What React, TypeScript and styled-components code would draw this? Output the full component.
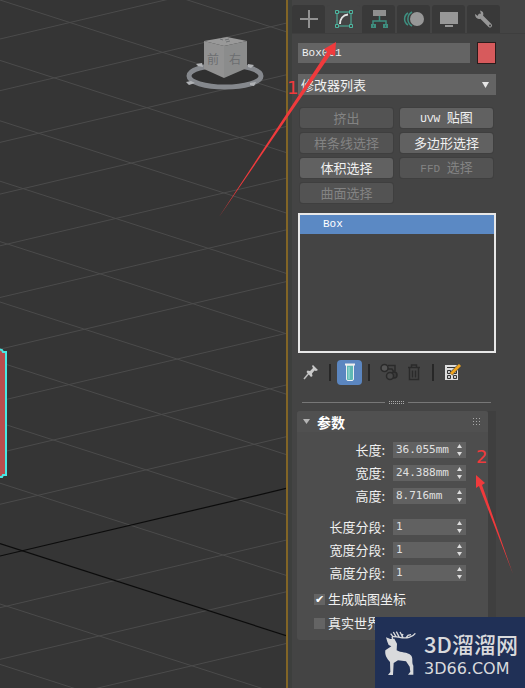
import React from "react";
import styled, { createGlobalStyle, css } from "styled-components";

const cjk = `"Noto Sans CJK SC", sans-serif`;

const GlobalStyle = createGlobalStyle`
  * { box-sizing: border-box; }
  body { margin: 0; background: #444444; }
  button, input, select { font: inherit; color: inherit; margin: 0; padding: 0; border: 0; }
`;

const Page = styled.div`
  position: relative;
  display: grid;
  grid-template-columns: minmax(0, 1fr) 237px;
  min-height: 100vh;
  overflow: hidden;
  color: #f0f0f0;
  font: 13px/16px ${cjk};
`;

const Viewport = styled.main`
  position: relative;
  background: #353535;
  border-right: 2px solid #826526;
`;

const Scene = styled.svg`
  position: absolute;
  inset: 0;
  width: 100%;
  height: 100%;
`;

const Panel = styled.aside`
  display: flex;
  flex-direction: column;
  background: #444444;
  border-left: 4px solid #3d3f3d;
  padding-top: 5px;
`;

const Tabs = styled.nav`
  display: flex;
  gap: 2px;
  border-bottom: 1px solid #3e3e3e;
`;

const Tab = styled.button<{ $active?: boolean }>`
  display: grid;
  place-items: center;
  width: 33px;
  height: 28px;
  border-radius: 3px 3px 0 0;
  background: ${(p) => (p.$active ? "#444444" : "#393939")};
`;

const PanelBody = styled.div`
  display: flex;
  flex-direction: column;
  padding: 8px 29px 0 6px;
`;

const NameRow = styled.div`
  display: flex;
  align-items: center;
  gap: 7px;
`;

const latin = css`
  font-family: "Liberation Mono", "Noto Sans CJK SC", monospace;
  font-size: 11px;
`;

const NameInput = styled.input`
  ${latin}
  flex: 1;
  min-width: 0;
  height: 20px;
  padding-left: 4px;
  background: #646464;
`;

const Swatch = styled.button`
  width: 19px;
  height: 22px;
  background: #d75a5c;
  border: 1px solid #2b1c1c;
`;

const SelectBox = styled.div`
  position: relative;
  margin: 10px 0 13px;
`;

const ModifierSelect = styled.select`
  appearance: none;
  display: block;
  width: 100%;
  height: 21px;
  padding-left: 3px;
  border-radius: 0;
  background: #646464;
`;

const SelectArrow = styled.svg`
  position: absolute;
  right: 7px;
  top: 8px;
  pointer-events: none;
`;

const ButtonGrid = styled.div`
  display: grid;
  grid-template-columns: 1fr 1fr;
  gap: 5px 7px;
  margin: 0 3px 10px 2px;
`;

const ModifierButton = styled.button`
  height: 20px;
  border-radius: 3px;
  background: #616161;
  box-shadow: 0 0 0 1px #3f3f3f;
  line-height: 18px;
  &:disabled {
    background: #535353;
    color: #838383;
  }
`;

const Latin = styled.span`
  ${latin}
`;

const Stack = styled.ul`
  height: 140px;
  margin: 0 0 5px;
  padding: 0;
  list-style: none;
  border: 2px solid #e8e8e8;
  background: #444444;
`;

const StackItem = styled.li`
  ${latin}
  height: 19px;
  line-height: 19px;
  padding-left: 23px;
  background: #5b89c4;
  color: #ffffff;
`;

const Toolbar = styled.div`
  display: flex;
  align-items: center;
  height: 28px;
`;

const ToolButton = styled.button<{ $active?: boolean }>`
  display: grid;
  place-items: center;
  width: 25px;
  height: 25px;
  border-radius: 4px;
  background: ${(p) => (p.$active ? "#5b86c0" : "transparent")};
`;

const ToolDivider = styled.i`
  width: 2px;
  height: 17px;
  margin: 0 6px;
  background: #272727;
`;

const Splitter = styled.div`
  display: flex;
  align-items: center;
  gap: 4px;
  margin: 15px 5px 7px 4px;
  &::before,
  &::after {
    content: "";
    flex: 1;
    height: 1px;
    background: #777777;
  }
`;

const RolloutArea = styled.div`
  display: flex;
  padding-right: 29px;
  margin-left: 5px;
`;

const Rollout = styled.section`
  flex: 1;
  min-height: 229px;
  border-radius: 3px;
  background: #4d4d4d;
`;

const ScrollTrack = styled.div`
  width: 8px;
  background: #3f3f3f;
`;

const RolloutHeader = styled.h2`
  display: flex;
  align-items: center;
  gap: 7px;
  height: 21px;
  margin: 0 0 9px;
  padding: 0 8px 0 6px;
  border-radius: 3px 3px 0 0;
  background: #505050;
  font-size: 14px;
  line-height: 20px;
  font-weight: 700;
  color: #ffffff;
  svg:last-child { margin-left: auto; }
`;

const Params = styled.div`
  display: grid;
  row-gap: 6px;
  padding-right: 22px;
`;

const Field = styled.div<{ $spaced?: boolean }>`
  display: flex;
  align-items: center;
  justify-content: flex-end;
  gap: 8px;
  height: 17px;
  margin-top: ${(p) => (p.$spaced ? "8px" : "0")};
`;

const SpinBox = styled.div`
  display: flex;
  width: 73px;
  height: 16px;
  background: #616161;
`;

const SpinInput = styled.input`
  flex: 1;
  min-width: 0;
  padding-left: 3px;
  background: transparent;
  color: #e0e0e0;
  font: 11px/16px "DejaVu Sans Mono", monospace;
`;

const Steps = styled.div`
  display: flex;
  flex-direction: column;
  width: 13px;
`;

const Step = styled.button`
  display: grid;
  place-items: center;
  height: 8px;
  background: transparent;
`;

const Checks = styled.div`
  display: grid;
  gap: 8px;
  padding: 10px 0 0 17px;
`;

const CheckLabel = styled.label`
  display: flex;
  align-items: center;
  gap: 3px;
  height: 16px;
  white-space: nowrap;
`;

const CheckBox = styled.input`
  appearance: none;
  display: grid;
  place-items: center;
  width: 11px;
  height: 11px;
  background: #646464;
  &:checked::after {
    content: "✔";
    font: 11px/11px "DejaVu Sans", sans-serif;
    color: #ffffff;
  }
`;

const Annotations = styled.div`
  position: absolute;
  inset: 0 0 auto auto;
  width: 310px;
  height: 600px;
  pointer-events: none;
`;

const Callout = styled.span<{ $x: number; $y: number }>`
  position: absolute;
  left: ${(p) => p.$x}px;
  top: ${(p) => p.$y}px;
  color: #f03a3c;
  font: 18px/20px "DejaVu Sans", sans-serif;
`;

const Watermark = styled.div`
  position: absolute;
  right: 0;
  bottom: 0;
  display: flex;
  align-items: center;
  gap: 5px;
  width: 150px;
  height: 71px;
  padding-left: 9px;
  background: #203056;
  color: #d9dadc;
`;

const Brand = styled.div`
  display: flex;
  flex-direction: column;
  strong {
    font: 500 22px/32px ${cjk};
  }
  span {
    font: 16px/20px "DejaVu Sans", sans-serif;
  }
`;

const rows = Array.from({ length: 16 }, (_, i) => i);

function ViewportScene() {
  return (
    <Scene>
      <g stroke="#4b4b4b" strokeWidth="1">
        {rows.filter((i) => i !== 10).map((i) => (
          <line key={i} x1="0" y1={39 + i * 51.7} x2="570" y2={-95.6 + i * 51.7} />
        ))}
        {rows.filter((i) => i !== 10).map((i) => (
          <line key={i} x1="0" y1={-60.4 + i * 60.4} x2="570" y2={123.2 + i * 60.4} />
        ))}
      </g>
      <g stroke="#0c0c0c" strokeWidth="1.2">
        <line x1="0" y1="556" x2="570" y2="421.4" />
        <line x1="0" y1="543.5" x2="570" y2="727" />
      </g>
      <path d="M-2 349 L2 350 L3 352 H6 V475 H3 L2 477 H-2Z" fill="#b94d4d" stroke="#48e8e4" strokeWidth="2" />
      <ellipse cx="225" cy="76" rx="34" ry="11" fill="#303030" />
      <ellipse cx="225" cy="76" rx="36" ry="11" fill="none" stroke="#85888d" strokeWidth="5" />
      <path
        d="M186 82l5-1 4 2-6 2zM250 83l6-1-2 4-4-1zM196 64l6-1 1 4-5-1zM248 64l6 1-3 3-3-1z"
        fill="#b0b2b5"
      />
      <path d="M204 41 L227 37 L247 41 L224 46Z" fill="#999999" />
      <path d="M204 41 L224 46 L224 78 L204 69Z" fill="#929292" />
      <path d="M224 46 L247 41 L247 68 L224 78Z" fill="#8b8c8c" />
      <path d="M220 39l3 1M225 40l4-1M226 42l4-1" stroke="#6f7173" />
      <g fontFamily="Noto Sans CJK SC, sans-serif" fontSize="12" fill="#6c6e70">
        <text x="207" y="64">前</text>
        <text x="229" y="64">右</text>
      </g>
    </Scene>
  );
}

const PlusIcon = () => (
  <svg width="20" height="20"><path d="M10 1v18M1 10h18" stroke="#929292" strokeWidth="2" /></svg>
);
const ModifyIcon = () => (
  <svg width="20" height="20" fill="none" stroke="#4db7a0">
    <path d="M3 3h14v14H3z" />
    <path d="M1.5 1.500h3v3h-3zM15.500 1.500h3v3h-3zM1.500 15.500h3v3h-3zM15.500 15.500h3v3h-3z" fill="#444444" />
    <path d="M6 15C6 10 9 6 14 5.500" stroke="#e4e4e4" strokeWidth="2" />
  </svg>
);
const HierarchyIcon = () => (
  <svg width="20" height="20" fill="none">
    <path d="M4 1h13v6H4z" fill="#8f8f8f" />
    <path d="M10.500 7v5M4 16v-4h13v4" stroke="#3e8f80" strokeWidth="1.500" />
    <path d="M2 15h5v4H2zM14 15h5v4h-5z" fill="#3e8f80" />
    <path d="M4 17h1M16 17h1" stroke="#393939" />
  </svg>
);
const MotionIcon = () => (
  <svg width="22" height="20" fill="none">
    <path d="M5 4a7 7 0 0 0 0 12M9 3a8 8 0 0 0 0 14" stroke="#3e8f80" strokeWidth="1.500" />
    <circle cx="14" cy="10" r="7" fill="#979797" />
  </svg>
);
const DisplayIcon = () => (
  <svg width="20" height="20" fill="#979797"><path d="M1 3h18v12H1zM6 16h8v2H6z" /></svg>
);
const WrenchIcon = () => (
  <svg width="20" height="20" fill="none">
    <path d="M6 6.500l10 10" stroke="#979797" strokeWidth="4" strokeLinecap="round" />
    <path d="M6 1.500C9 2 10 4 9 7L6 10C3 10 1 8 1 5l3 2 3-2z" fill="#979797" />
    <circle cx="16" cy="16.500" r="1" fill="#393939" />
  </svg>
);
const PinIcon = () => (
  <svg width="16" height="16">
    <path d="M1 15L6 9" stroke="#bdbdbd" strokeWidth="1.500" />
    <path d="M10 1l5 5-2 1-1.500-.5-2.500 3 .5 2.500-1.500 1L3.500 8l1-1.500 2.500 .500 3-3L9 2z" fill="#c9c9c9" />
  </svg>
);
const TubeIcon = () => (
  <svg width="12" height="19">
    <path d="M2.500 2v14q0 1.500 1.500 1.500h4q1.500 0 1.500-1.500V2z" fill="#5fb9b4" stroke="#e8eef2" />
    <path d="M1 1.500h10" stroke="#eeeeee" strokeWidth="2" />
    <path d="M5 4v12" stroke="#a8e2dc" />
  </svg>
);
const UniqueIcon = () => (
  <svg width="18" height="18" fill="none" stroke="#2a2a2a" strokeWidth="1.500">
    <path d="M8 2.500h7v6M8 6h4l2 3" />
    <circle cx="4.500" cy="5" r="3.500" fill="#555555" />
    <circle cx="14" cy="12" r="3" fill="#3a3a3a" />
    <circle cx="10" cy="13" r="3.500" fill="#484848" />
  </svg>
);
const TrashIcon = () => (
  <svg width="14" height="18" fill="none" stroke="#2a2a2a" strokeWidth="1.500">
    <path d="M1 4.500h12M4.500 4V2h5v2M2.500 5v11.500h9V5M5.500 7.500v7M8.500 7.500v7" />
  </svg>
);
const ConfigureIcon = () => (
  <svg width="17" height="17" fill="none">
    <path d="M1 1h13v15H1z" fill="#dedede" />
    <path d="M3 3.500h8" stroke="#333333" />
    <path d="M3.500 6.500h3v3h-3zM9.500 6.500h3v3h-3zM3.500 11.500h3v3h-3zM9.500 11.500h3v3h-3z" fill="#cccccc" stroke="#333333" />
    <path d="M7 10l9-9" stroke="#444444" strokeWidth="4" />
    <path d="M7 10l9-9" stroke="#efa51f" strokeWidth="3" />
  </svg>
);
const Grip = ({ cols, rowsCount, step }: { cols: number; rowsCount: number; step: number }) => (
  <svg width={(cols - 1) * step + 1} height={(rowsCount - 1) * step + 1} fill="#a8a8a8">
    {Array.from({ length: cols * rowsCount }, (_, i) => (
      <rect key={i} x={(i % cols) * step} y={Math.floor(i / cols) * step} width="1" height="1" />
    ))}
  </svg>
);
const Deer = () => (
  <svg width="35" height="48" viewBox="10 12 105 144" fill="#d9dadc">
    <path d="M16 37L29 42 41 41 49 56 48 76C60 84 80 80 92 92 98 102 92 112 98 122L98 149H82L89 140 87 125 76 109 52 106 39 114 37 150H22L29 141 28 111C18 100 12 90 14 76L32 64 24 60 20 50Z" />
    <path d="M36 42C31 31 40 35 57 37 78 42 96 36 104 25M37 35L30 26M46 35L38 21M56 37L47 20M67 38L58 21M76 39L82 31 91 29M63 35L67 27" fill="none" stroke="#d9dadc" strokeWidth="4" />
  </svg>
);

const tabs = [
  { label: "创建", icon: <PlusIcon /> },
  { label: "修改", icon: <ModifyIcon />, active: true },
  { label: "层次", icon: <HierarchyIcon /> },
  { label: "运动", icon: <MotionIcon /> },
  { label: "显示", icon: <DisplayIcon /> },
  { label: "实用程序", icon: <WrenchIcon /> },
];

const modifiers = [
  { prefix: "", text: "挤出", off: true },
  { prefix: "UVW ", text: "贴图", off: false },
  { prefix: "", text: "样条线选择", off: true },
  { prefix: "", text: "多边形选择", off: false },
  { prefix: "", text: "体积选择", off: false },
  { prefix: "FFD ", text: "选择", off: true },
  { prefix: "", text: "曲面选择", off: true },
];

const fields = [
  { id: "length", label: "长度:", value: "36.055mm" },
  { id: "width", label: "宽度:", value: "24.388mm" },
  { id: "height", label: "高度:", value: "8.716mm" },
  { id: "length-segs", label: "长度分段:", value: "1", spaced: true },
  { id: "width-segs", label: "宽度分段:", value: "1" },
  { id: "height-segs", label: "高度分段:", value: "1" },
];

export default function App() {
  return (
    <Page>
      <GlobalStyle />
      <Viewport>
        <ViewportScene />
      </Viewport>
      <Panel>
        <Tabs>
          {tabs.map((t) => (
            <Tab key={t.label} $active={t.active} aria-label={t.label}>{t.icon}</Tab>
          ))}
        </Tabs>
        <PanelBody>
          <NameRow>
            <NameInput aria-label="名称" defaultValue="Box001" />
            <Swatch aria-label="颜色" />
          </NameRow>
          <SelectBox>
            <ModifierSelect aria-label="修改器列表">
              <option>修改器列表</option>
            </ModifierSelect>
            <SelectArrow width="7" height="6"><path d="M0 0h7L3.500 6z" fill="#e6e6e6" /></SelectArrow>
          </SelectBox>
          <ButtonGrid>
            {modifiers.map((m) => (
              <ModifierButton key={m.text + m.prefix} disabled={m.off}>
                {m.prefix && <Latin>{m.prefix}</Latin>}
                {m.text}
              </ModifierButton>
            ))}
          </ButtonGrid>
          <Stack>
            <StackItem>Box</StackItem>
          </Stack>
          <Toolbar>
            <ToolButton aria-label="锁定堆栈"><PinIcon /></ToolButton>
            <ToolDivider />
            <ToolButton $active aria-label="显示最终结果"><TubeIcon /></ToolButton>
            <ToolDivider />
            <ToolButton aria-label="使唯一"><UniqueIcon /></ToolButton>
            <ToolButton aria-label="移除修改器"><TrashIcon /></ToolButton>
            <ToolDivider />
            <ToolButton aria-label="配置修改器集"><ConfigureIcon /></ToolButton>
          </Toolbar>
          <Splitter><Grip cols={8} rowsCount={2} step={2} /></Splitter>
        </PanelBody>
        <RolloutArea>
          <Rollout>
            <RolloutHeader>
              <svg width="7" height="5"><path d="M0 0h7L3.500 5z" fill="#b5b5b5" /></svg>
              参数
              <Grip cols={3} rowsCount={3} step={3} />
            </RolloutHeader>
            <Params>
              {fields.map((f) => (
                <Field key={f.id} $spaced={f.spaced}>
                  <label htmlFor={f.id}>{f.label}</label>
                  <SpinBox>
                    <SpinInput id={f.id} defaultValue={f.value} />
                    <Steps>
                      <Step aria-label="增加"><svg width="5" height="4"><path d="M0 4h5L2.500 0z" fill="#dddddd" /></svg></Step>
                      <Step aria-label="减少"><svg width="5" height="4"><path d="M0 0h5L2.500 4z" fill="#dddddd" /></svg></Step>
                    </Steps>
                  </SpinBox>
                </Field>
              ))}
            </Params>
            <Checks>
              <CheckLabel><CheckBox type="checkbox" defaultChecked />生成贴图坐标</CheckLabel>
              <CheckLabel><CheckBox type="checkbox" />真实世界</CheckLabel>
            </Checks>
          </Rollout>
          <ScrollTrack />
        </RolloutArea>
      </Panel>
      <Annotations>
        <svg width="310" height="600" viewBox="215 0 310 600" fill="#f03a3c">
          <path d="M336 42L335 56 331 54 219 217 327 52 324 49Z" />
          <path d="M476 475L485 483 482 485 513 574 479 486 476 488Z" />
        </svg>
        <Callout $x={72} $y={78}>1</Callout>
        <Callout $x={261} $y={447}>2</Callout>
      </Annotations>
      <Watermark>
        <Deer />
        <Brand>
          <strong>3D溜溜网</strong>
          <span>3D66.COM</span>
        </Brand>
      </Watermark>
    </Page>
  );
}
